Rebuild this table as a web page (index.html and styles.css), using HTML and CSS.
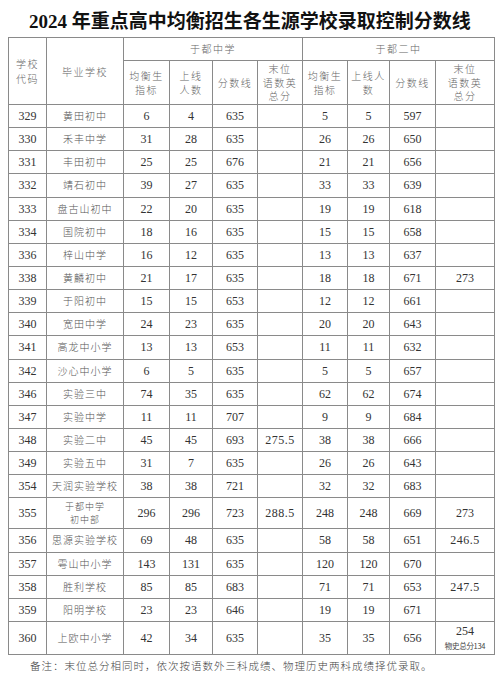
FILE: index.html
```html
<!DOCTYPE html>
<html lang="zh">
<head>
<meta charset="utf-8">
<link rel="stylesheet" href="styles.css">
</head>
<body>
<div class="page">
  <h1 class="title">2024 年重点高中均衡招生各生源学校录取控制分数线</h1>
  <table class="grid">
    <colgroup>
      <col class="c1"><col class="c2"><col class="c3"><col class="c4"><col class="c5"><col class="c6"><col class="c7"><col class="c8"><col class="c9"><col class="c10">
    </colgroup>
    <thead>
      <tr class="h1">
        <th rowspan="2">学校<br>代码</th>
        <th rowspan="2">毕业学校</th>
        <th colspan="4">于都中学</th>
        <th colspan="4">于都二中</th>
      </tr>
      <tr class="h2">
        <th>均衡生<br>指标</th>
        <th>上线<br>人数</th>
        <th>分数线</th>
        <th>末位<br>语数英<br>总分</th>
        <th>均衡生<br>指标</th>
        <th>上线人<br>数</th>
        <th>分数线</th>
        <th>末位<br>语数英<br>总分</th>
      </tr>
    </thead>
    <tbody>
      <tr><td>329</td><td class="n">黄田初中</td><td>6</td><td>4</td><td>635</td><td></td><td>5</td><td>5</td><td>597</td><td></td></tr>
      <tr><td>330</td><td class="n">禾丰中学</td><td>31</td><td>28</td><td>635</td><td></td><td>26</td><td>26</td><td>650</td><td></td></tr>
      <tr><td>331</td><td class="n">丰田初中</td><td>25</td><td>25</td><td>676</td><td></td><td>21</td><td>21</td><td>656</td><td></td></tr>
      <tr><td>332</td><td class="n">靖石初中</td><td>39</td><td>27</td><td>635</td><td></td><td>33</td><td>33</td><td>639</td><td></td></tr>
      <tr><td>333</td><td class="n">盘古山初中</td><td>22</td><td>20</td><td>635</td><td></td><td>19</td><td>19</td><td>618</td><td></td></tr>
      <tr><td>334</td><td class="n">国院初中</td><td>18</td><td>16</td><td>635</td><td></td><td>15</td><td>15</td><td>658</td><td></td></tr>
      <tr><td>336</td><td class="n">梓山中学</td><td>16</td><td>12</td><td>635</td><td></td><td>13</td><td>13</td><td>637</td><td></td></tr>
      <tr><td>338</td><td class="n">黄麟初中</td><td>21</td><td>17</td><td>635</td><td></td><td>18</td><td>18</td><td>671</td><td>273</td></tr>
      <tr><td>339</td><td class="n">于阳初中</td><td>15</td><td>15</td><td>653</td><td></td><td>12</td><td>12</td><td>661</td><td></td></tr>
      <tr><td>340</td><td class="n">宽田中学</td><td>24</td><td>23</td><td>635</td><td></td><td>20</td><td>20</td><td>643</td><td></td></tr>
      <tr><td>341</td><td class="n">高龙中小学</td><td>13</td><td>13</td><td>653</td><td></td><td>11</td><td>11</td><td>632</td><td></td></tr>
      <tr><td>342</td><td class="n">沙心中小学</td><td>6</td><td>5</td><td>635</td><td></td><td>5</td><td>5</td><td>657</td><td></td></tr>
      <tr><td>346</td><td class="n">实验三中</td><td>74</td><td>35</td><td>635</td><td></td><td>62</td><td>62</td><td>674</td><td></td></tr>
      <tr><td>347</td><td class="n">实验中学</td><td>11</td><td>11</td><td>707</td><td></td><td>9</td><td>9</td><td>684</td><td></td></tr>
      <tr><td>348</td><td class="n">实验二中</td><td>45</td><td>45</td><td>693</td><td class="dec">275.5</td><td>38</td><td>38</td><td>666</td><td></td></tr>
      <tr><td>349</td><td class="n">实验五中</td><td>31</td><td>7</td><td>635</td><td></td><td>26</td><td>26</td><td>643</td><td></td></tr>
      <tr><td>354</td><td class="n">天润实验学校</td><td>38</td><td>38</td><td>721</td><td></td><td>32</td><td>32</td><td>683</td><td></td></tr>
      <tr class="tall"><td>355</td><td class="n two">于都中学<br>初中部</td><td>296</td><td>296</td><td>723</td><td class="dec">288.5</td><td>248</td><td>248</td><td>669</td><td>273</td></tr>
      <tr><td>356</td><td class="n">思源实验学校</td><td>69</td><td>48</td><td>635</td><td></td><td>58</td><td>58</td><td>651</td><td class="dec">246.5</td></tr>
      <tr><td>357</td><td class="n">雩山中小学</td><td>143</td><td>131</td><td>635</td><td></td><td>120</td><td>120</td><td>670</td><td></td></tr>
      <tr><td>358</td><td class="n">胜利学校</td><td>85</td><td>85</td><td>683</td><td></td><td>71</td><td>71</td><td>653</td><td class="dec">247.5</td></tr>
      <tr><td>359</td><td class="n">阳明学校</td><td>23</td><td>23</td><td>646</td><td></td><td>19</td><td>19</td><td>671</td><td></td></tr>
      <tr class="last"><td>360</td><td class="n">上欧中小学</td><td>42</td><td>34</td><td>635</td><td></td><td>35</td><td>35</td><td>656</td><td><span class="big">254</span><br><span class="small">物史总分134</span></td></tr>
    </tbody>
  </table>
  <p class="note">备注：末位总分相同时，依次按语数外三科成绩、物理历史两科成绩择优录取。</p>
</div>
</body>
</html>
```

FILE: styles.css
```css
html, body {
  margin: 0;
  padding: 0;
  background: #ffffff;
}
.page {
  width: 500px;
  height: 689px;
  overflow: hidden;
  font-family: "Liberation Serif", "Noto Sans CJK SC", serif;
  color: #333;
}
.title {
  margin: 0;
  height: 37px;
  line-height: 44px;
  text-align: center;
  font-size: 19px;
  font-weight: bold;
  color: #111;
  letter-spacing: 0;
  font-family: "Liberation Serif", "Noto Sans CJK SC", serif;
}
.grid {
  margin-left: 8px;
  width: 486px;
  border-collapse: collapse;
  table-layout: fixed;
}
.c1 { width: 38px; }
.c2 { width: 77px; }
.c3 { width: 46px; }
.c4 { width: 43px; }
.c5 { width: 45px; }
.c6 { width: 45px; }
.c7 { width: 45px; }
.c8 { width: 42px; }
.c9 { width: 46px; }
.c10 { width: 59px; }
.grid th, .grid td {
  border: 1px solid #8a8a8a;
  padding: 0;
  text-align: center;
  vertical-align: middle;
}
.grid th {
  font-weight: 300;
  font-size: 10px;
  line-height: 13.5px;
  color: #666;
  letter-spacing: 1.5px;
  font-family: "Noto Sans CJK SC", sans-serif;
}
.grid tr.h1 { height: 23px; }
.grid tr.h2 { height: 44px; }
.grid tr.h1 th[rowspan] { line-height: 15px; }
.grid td {
  font-size: 12px;
  line-height: 14px;
  color: #333;
}
.grid tbody tr { height: 23.15px; }
.grid tbody tr.tall { height: 31px; }
.grid tbody tr.last { height: 33px; }
.grid td.n {
  font-family: "Noto Sans CJK SC", sans-serif;
  font-weight: 300;
  font-size: 10px;
  color: #555;
  letter-spacing: 1px;
}
.grid td.two { font-size: 9px; line-height: 13px; }
.grid td.dec { letter-spacing: 0.5px; }
.big { font-size: 12px; line-height: 14px; }
.small {
  font-size: 7.5px;
  line-height: 10px;
  font-family: "Noto Sans CJK SC", sans-serif;
  color: #444;
  letter-spacing: -0.3px;
}
.note {
  margin: 4px 0 0 0;
  padding-left: 30px;
  font-family: "Noto Sans CJK SC", sans-serif;
  font-weight: 300;
  font-size: 10.5px;
  letter-spacing: 1px;
  color: #444;
  line-height: 14px;
}
```
